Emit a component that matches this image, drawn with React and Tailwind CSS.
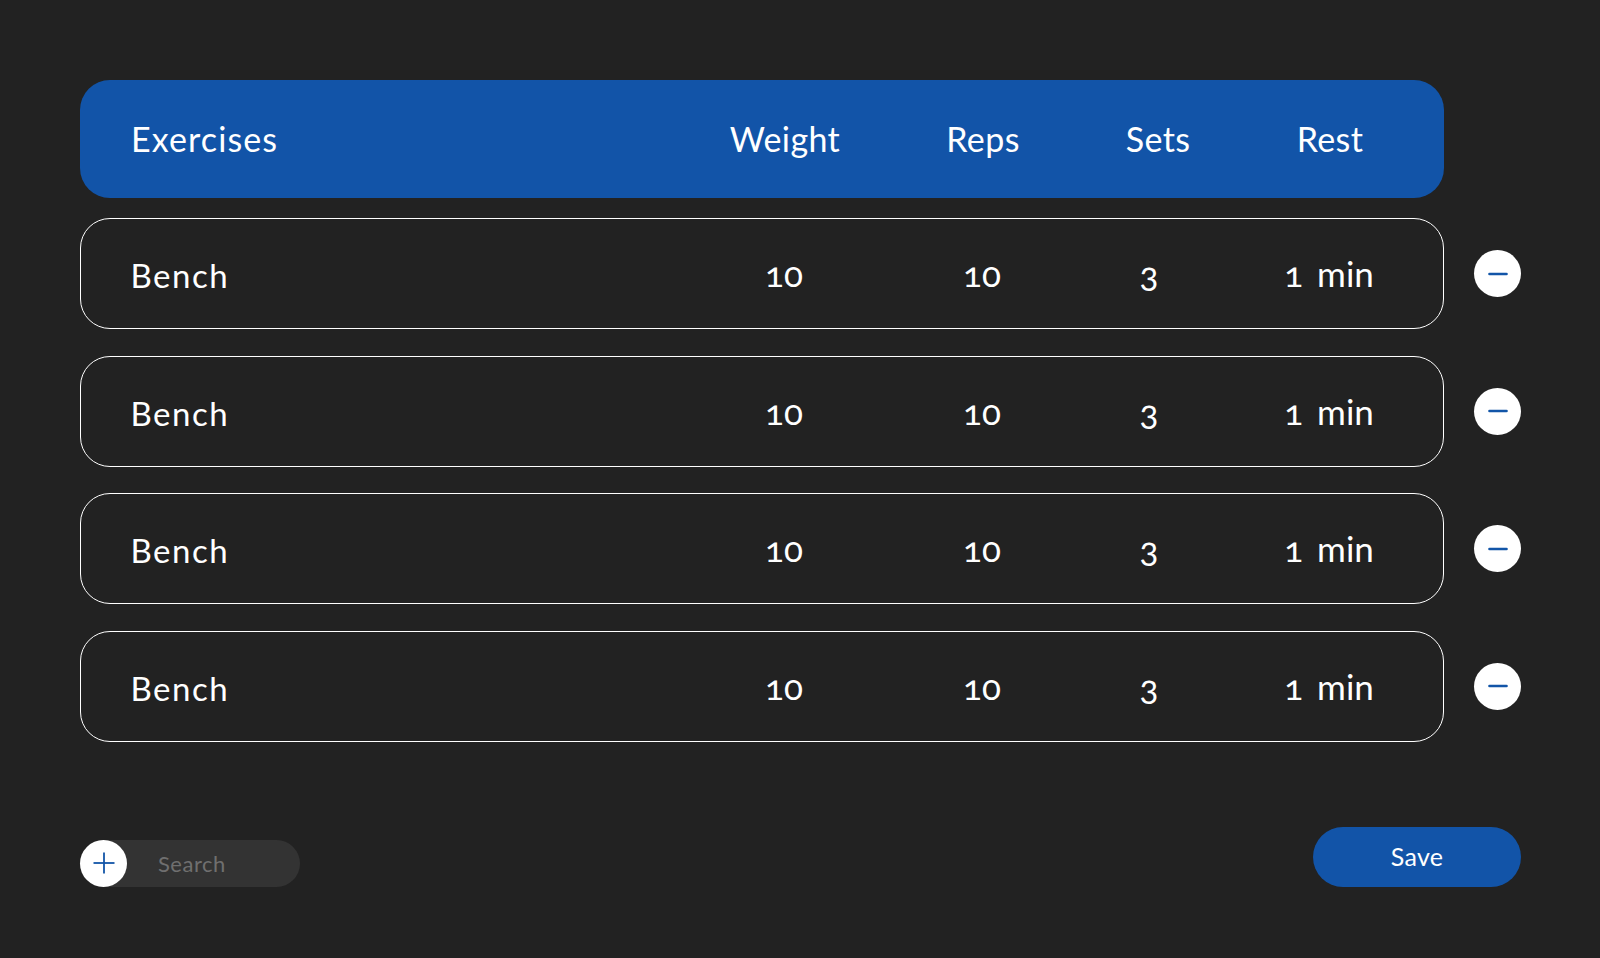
import React from "react";

const font = { fontFamily: "Lato, 'Noto Sans', sans-serif" };

function Cols({ cells, numClass, thirdClass = "" }) {
  return (
    <>
      <div className={"w-[140px] text-center " + numClass}>{cells[0]}</div>
      <div className={"ml-[58px] w-[140px] text-center " + numClass}>{cells[1]}</div>
      <div className={"ml-[35px] w-[140px] text-center " + numClass + " " + thirdClass}>{cells[2]}</div>
      <div className={"ml-[32px] w-[140px] text-center " + numClass}>{cells[3]}</div>
    </>
  );
}

function MinusButton() {
  return (
    <button className="ml-[30px] flex h-[47px] w-[47px] items-center justify-center rounded-full bg-white">
      <svg width="20" height="4" viewBox="0 0 20 4">
        <line x1="1.5" y1="2" x2="18.5" y2="2" stroke="#1255a8" strokeWidth="2.6" strokeLinecap="round" />
      </svg>
    </button>
  );
}

function Row() {
  return (
    <div className="flex items-center">
      <div className="flex h-[111px] w-[1364px] items-center rounded-[30px] border-[1.5px] border-white pr-[44px] text-white">
        <div className="flex-1 pl-[49.5px] pt-[4px] text-[33px] leading-none tracking-[1.5px]">Bench</div>
        <Cols
          numClass="text-[35px] leading-none oldstyle-nums"
          thirdClass="pr-[16px]"
          cells={[
            "10",
            "10",
            "3",
            <span>
              1<span className="ml-[14px]">min</span>
            </span>,
          ]}
        />
      </div>
      <MinusButton />
    </div>
  );
}

export default function App() {
  return (
    <div className="min-h-[958px] w-full bg-[#222222]" style={font}>
      <div className="ml-[80px] flex w-[1441px] flex-col pt-[80px]">
        <div className="flex h-[118px] w-[1364px] items-center rounded-[30px] bg-[#1254a8] pr-[44px] text-white">
          <div className="flex-1 pl-[51px] text-[34px] leading-none tracking-[1.1px]">Exercises</div>
          <Cols numClass="text-[34px] leading-none tracking-[0.4px]" cells={["Weight", "Reps", "Sets", "Rest"]} />
        </div>
        <div className="mt-[20px] flex flex-col gap-[26.5px]">
          <Row />
          <Row />
          <Row />
          <Row />
        </div>
        <div className="mt-[85px] flex items-end justify-between">
          <div className="flex h-[47px] w-[220px] items-center rounded-full bg-[#333333]">
            <div className="flex h-[47px] w-[47px] shrink-0 items-center justify-center rounded-full bg-white">
              <svg width="24" height="24" viewBox="0 0 24 24">
                <line x1="12" y1="1.5" x2="12" y2="22.5" stroke="#1255a8" strokeWidth="1.8" />
                <line x1="1.5" y1="12" x2="22.5" y2="12" stroke="#1255a8" strokeWidth="1.8" />
              </svg>
            </div>
            <span className="ml-[31px] pt-[2px] text-[22px] leading-none tracking-[0.5px] text-[#6f6f6f]">Search</span>
          </div>
          <button className="flex h-[60px] w-[208px] items-center justify-center rounded-full bg-[#1254a8] text-[25px] leading-none tracking-[0.3px] text-white">
            Save
          </button>
        </div>
      </div>
    </div>
  );
}
